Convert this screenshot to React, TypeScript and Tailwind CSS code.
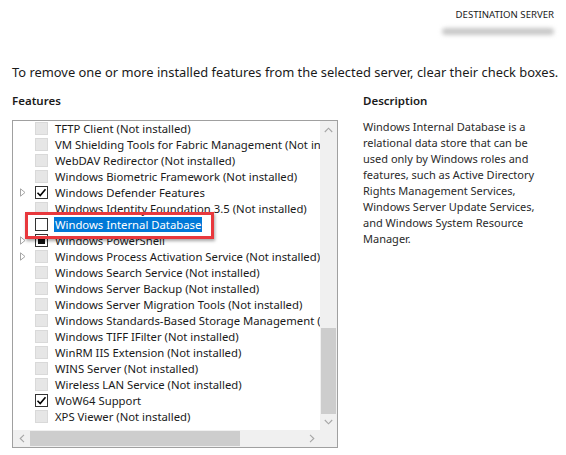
import React from "react";

type Item = { label: string; state: "disabled" | "checked" | "unchecked" | "indeterminate"; expander?: boolean; selected?: boolean };

const items: Item[] = [
  { label: "TFTP Client (Not installed)", state: "disabled" },
  { label: "VM Shielding Tools for Fabric Management (Not installed)", state: "disabled" },
  { label: "WebDAV Redirector (Not installed)", state: "disabled" },
  { label: "Windows Biometric Framework (Not installed)", state: "disabled" },
  { label: "Windows Defender Features", state: "checked", expander: true },
  { label: "Windows Identity Foundation 3.5 (Not installed)", state: "disabled" },
  { label: "Windows Internal Database", state: "unchecked", selected: true },
  { label: "Windows PowerShell", state: "indeterminate", expander: true },
  { label: "Windows Process Activation Service (Not installed)", state: "disabled", expander: true },
  { label: "Windows Search Service (Not installed)", state: "disabled" },
  { label: "Windows Server Backup (Not installed)", state: "disabled" },
  { label: "Windows Server Migration Tools (Not installed)", state: "disabled" },
  { label: "Windows Standards-Based Storage Management (Not installed)", state: "disabled" },
  { label: "Windows TIFF IFilter (Not installed)", state: "disabled" },
  { label: "WinRM IIS Extension (Not installed)", state: "disabled" },
  { label: "WINS Server (Not installed)", state: "disabled" },
  { label: "Wireless LAN Service (Not installed)", state: "disabled" },
  { label: "WoW64 Support", state: "checked" },
  { label: "XPS Viewer (Not installed)", state: "disabled" },
];

function Check({ state }: { state: Item["state"] }) {
  if (state === "disabled") {
    return <div className="w-[13px] h-[13px] shrink-0 bg-[#e6e6e6] border border-[#d9d9d9]" />;
  }
  return (
    <div className="w-[13px] h-[13px] shrink-0 bg-white border border-[#333333] flex items-center justify-center">
      {state === "checked" && (
        <svg width="11" height="11" viewBox="0 0 11 11">
          <path d="M1.5 5.8 L4.2 8.5 L9.5 2.2" fill="none" stroke="#000" strokeWidth="1.6" />
        </svg>
      )}
      {state === "indeterminate" && <div className="w-[7px] h-[7px] bg-[#111]" />}
    </div>
  );
}

function Expander({ show }: { show?: boolean }) {
  return (
    <div className="w-[8px] h-[16px] shrink-0 flex items-center">
      {show && (
        <svg width="6" height="9" viewBox="0 0 6 9">
          <path d="M0.5 0.8 L5 4.5 L0.5 8.2 Z" fill="none" stroke="#a6a6a6" strokeWidth="1" />
        </svg>
      )}
    </div>
  );
}

export default function App() {
  return (
    <div
      className="w-[566px] h-[455px] bg-white text-[#1a1a1a] overflow-hidden"
      style={{ fontFamily: '"Noto Sans", "Open Sans", sans-serif' }}
    >
      <div className="flex flex-col items-end pr-[12px] pt-[8px] h-[52px]">
        <div className="text-[9.6px] leading-[14px] text-[#1a1a1a]">DESTINATION SERVER</div>
        <div className="mt-[6px] w-[112px] h-[7px] rounded-full bg-[#c8c8c8] blur-[2px]" />
      </div>
      <div className="pl-[12px] mt-[12px] text-[12.9px] leading-[16px] whitespace-nowrap">
        To remove one or more installed features from the selected server, clear their check boxes.
      </div>
      <div className="flex mt-[13px]">
        <div className="ml-[12px] w-[326px] flex flex-col">
          <div className="text-[11.5px] leading-[16px] font-semibold mb-[11px]">Features</div>
          <div className="relative h-[328px] border border-[#a0a0a0] flex flex-col">
            <div className="flex flex-1 min-h-0">
              <div className="flex-1 overflow-hidden pt-0">
                <div className="-mt-[1px]">
                  {items.map((it) => (
                    <div key={it.label} className="h-[16px] flex items-center pl-[7px] whitespace-nowrap text-[11.3px]">
                      <Expander show={it.expander} />
                      <div className="ml-[7px]">
                        <Check state={it.state} />
                      </div>
                      <span
                        className={
                          "ml-[6px] leading-[15px] px-[1px] " +
                          (it.selected ? "bg-[#0078d7] text-white" : "")
                        }
                      >
                        {it.label}
                      </span>
                    </div>
                  ))}
                </div>
              </div>
              <div className="w-[17px] bg-[#f0f0f0] flex flex-col">
                <div className="h-[17px] flex items-center justify-center">
                  <svg width="9" height="6" viewBox="0 0 9 6">
                    <path d="M0.8 5 L4.5 1.2 L8.2 5" fill="none" stroke="#a6a6a6" strokeWidth="1.1" />
                  </svg>
                </div>
                <div className="flex-1" />
                <div className="h-[86px] mx-[1px] bg-[#cdcdcd]" />
                <div className="h-[16px] flex items-center justify-center">
                  <svg width="9" height="6" viewBox="0 0 9 6">
                    <path d="M0.8 1 L4.5 4.8 L8.2 1" fill="none" stroke="#a6a6a6" strokeWidth="1.1" />
                  </svg>
                </div>
              </div>
            </div>
            <div className="h-[17px] flex bg-[#f0f0f0]">
              <div className="w-[17px] flex items-center justify-center">
                <svg width="6" height="9" viewBox="0 0 6 9">
                  <path d="M5 0.8 L1.2 4.5 L5 8.2" fill="none" stroke="#a6a6a6" strokeWidth="1.1" />
                </svg>
              </div>
              <div className="flex-1 flex py-[1px]">
                <div className="w-[210px] bg-[#cdcdcd]" />
              </div>
              <div className="w-[17px] flex items-center justify-center">
                <svg width="6" height="9" viewBox="0 0 6 9">
                  <path d="M1 0.8 L4.8 4.5 L1 8.2" fill="none" stroke="#a6a6a6" strokeWidth="1.1" />
                </svg>
              </div>
              <div className="w-[17px]" />
            </div>
            <div className="absolute left-[12px] top-[91px] w-[189px] h-[27px] border-[3px] border-[#e8383d] shadow-[1px_2px_3px_rgba(0,0,0,0.35)]" />
          </div>
        </div>
        <div className="ml-[25px] w-[190px]">
          <div className="text-[11.5px] leading-[16px] font-semibold mb-[10px]">Description</div>
          <div className="text-[11px] leading-[16px] text-[#2a2a2a]">
            Windows Internal Database is a relational data store that can be used only by Windows roles and
            features, such as Active Directory Rights Management Services, Windows Server Update Services,
            and Windows System Resource Manager.
          </div>
        </div>
      </div>
    </div>
  );
}
